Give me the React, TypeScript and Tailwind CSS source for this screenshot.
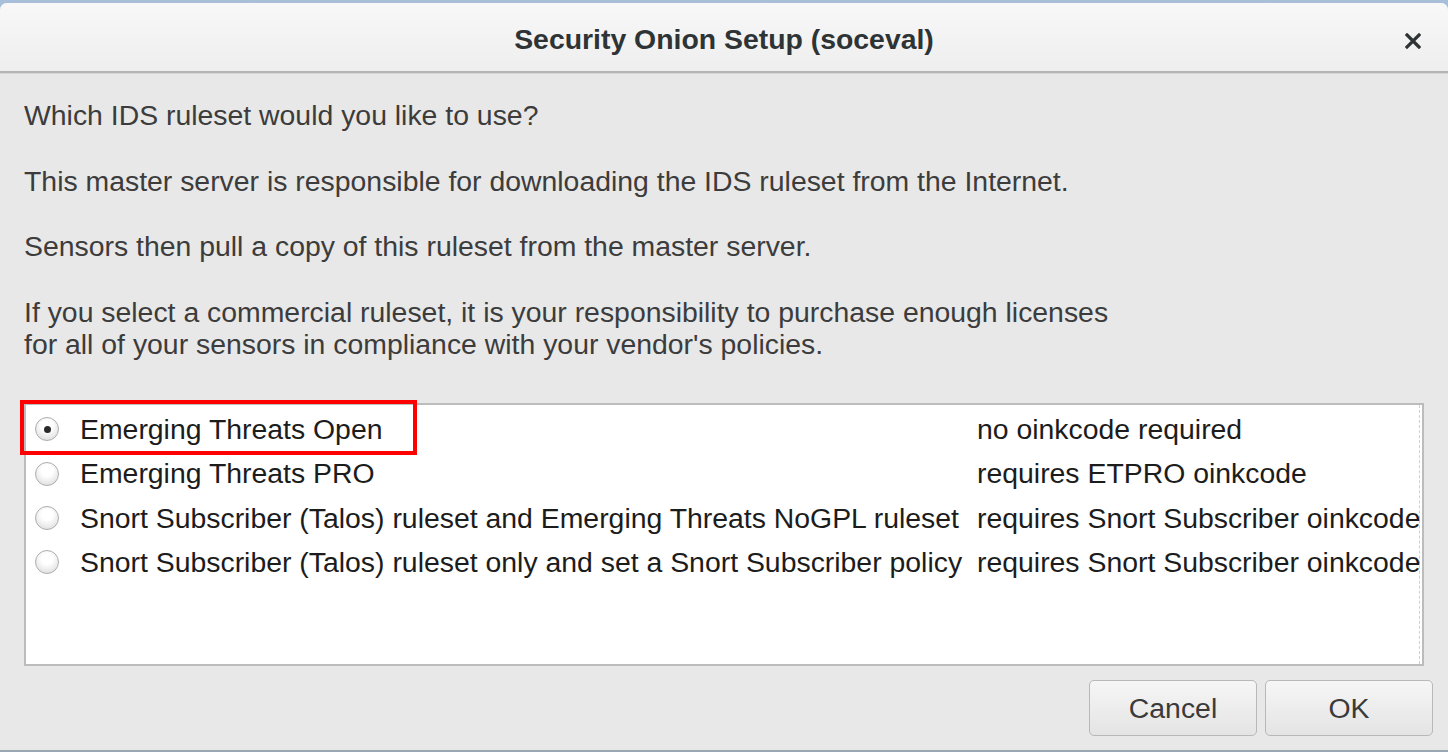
import React from 'react';

const rules = [
  { name: 'Emerging Threats Open', note: 'no oinkcode required' },
  { name: 'Emerging Threats PRO', note: 'requires ETPRO oinkcode' },
  { name: 'Snort Subscriber (Talos) ruleset and Emerging Threats NoGPL ruleset', note: 'requires Snort Subscriber oinkcode' },
  { name: 'Snort Subscriber (Talos) ruleset only and set a Snort Subscriber policy', note: 'requires Snort Subscriber oinkcode' },
];

function Radio({ checked }: { checked: boolean }) {
  return (
    <div className="w-[24px] h-[24px] shrink-0 rounded-full border border-[#adadad] bg-[radial-gradient(circle_at_50%_35%,#ffffff_30%,#d6d6d6_100%)] flex items-center justify-center">
      {checked && <div className="w-[7px] h-[7px] rounded-full bg-[#2a2a2a]" />}
    </div>
  );
}

export default function App() {
  const selected = 0;

  return (
    <div className="w-[1448px] h-[752px] overflow-hidden bg-[#a8bfd9] pt-[3px] font-['Liberation_Sans',Arial,sans-serif]">
      <div className="h-[747px] rounded-t-[7px] bg-[#e8e8e8] flex flex-col overflow-hidden">
        {/* Title bar */}
        <div className="relative h-[70px] shrink-0 flex items-center justify-center pt-[5px] bg-gradient-to-b from-[#f8f8f8] to-[#eeeeee] border-b-2 border-[#b4b4b4]">
          <span className="text-[28.4px] font-bold text-[#2e3436]">Security Onion Setup (soceval)</span>
          <button className="absolute right-[26px] top-[29px] w-[18px] h-[18px] flex items-center justify-center">
            <svg width="16" height="16" viewBox="0 0 16 16">
              <path d="M2 2 L14 14 M14 2 L2 14" stroke="#2e3436" strokeWidth="3.2" strokeLinecap="square" />
            </svg>
          </button>
        </div>
        <div className="h-[1px] shrink-0 bg-[#d6d6d6]" />

        {/* Body */}
        <div className="flex-1 flex flex-col pl-[24px] pr-[15px] pt-[25px] text-[28.4px] leading-[32.75px] text-[#3c3c3c]">
          <p className="mb-[32.75px]">Which IDS ruleset would you like to use?</p>
          <p className="mb-[32.75px]">This master server is responsible for downloading the IDS ruleset from the Internet.</p>
          <p className="mb-[32.75px]">Sensors then pull a copy of this ruleset from the master server.</p>
          <p>
            If you select a commercial ruleset, it is your responsibility to purchase enough licenses
            <br />
            for all of your sensors in compliance with your vendor's policies.
          </p>

          {/* Ruleset list */}
          <div className="relative mt-[42px] mr-[9px] h-[263px] border-2 border-[#bcbcbc] bg-white">
            <div className="h-full mr-[2px] border-r border-dashed border-[#d0d0d0] pt-[2px]">
              {rules.map((r, i) => (
                <div key={i} className="h-[44.4px] flex items-center pl-[9px] whitespace-nowrap text-[#1c1c1c]">
                  <Radio checked={i === selected} />
                  <span className="ml-[21px] w-[897px] shrink-0">{r.name}</span>
                  <span className="shrink-0">{r.note}</span>
                </div>
              ))}
            </div>
            <div className="absolute -left-[6px] -top-[5px] w-[397px] h-[55px] border-[4px] border-[#ff0000] pointer-events-none" />
          </div>

          {/* Buttons */}
          <div className="mt-[14px] flex justify-end gap-[8px]">
            <button className="w-[168px] h-[56px] rounded-[5px] border border-[#b8b8b8] bg-gradient-to-b from-[#f6f6f6] to-[#e4e4e4] text-[#3a3a3a]">
              Cancel
            </button>
            <button className="w-[168px] h-[56px] rounded-[5px] border border-[#b8b8b8] bg-gradient-to-b from-[#f6f6f6] to-[#e4e4e4] text-[#3a3a3a]">
              OK
            </button>
          </div>
        </div>
      </div>
      <div className="h-[2px] bg-[#9aa6b2]" />
    </div>
  );
}
